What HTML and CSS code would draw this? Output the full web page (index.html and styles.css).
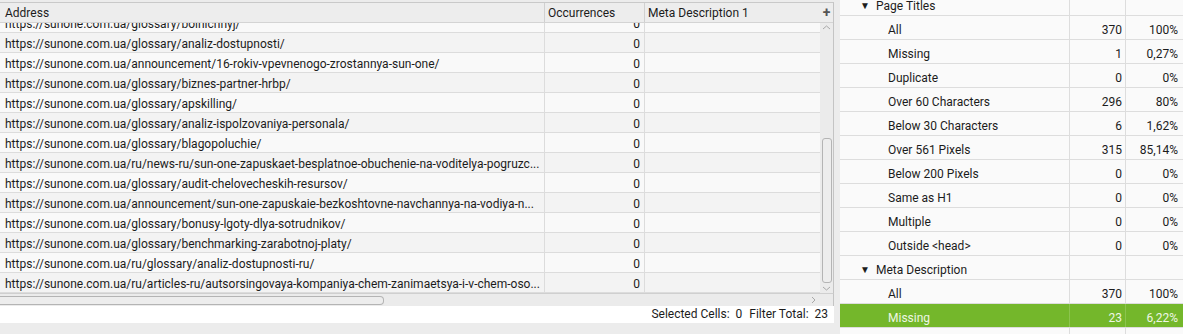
FILE: index.html
```html
<!DOCTYPE html>
<html lang="en">
<head>
    <meta charset="UTF-8">
    <title>Crawl Overview</title>
    <link rel="stylesheet" href="styles.css">
</head>
<body>

    <!-- Left: URL table -->
    <div class="left-panel">
        <div class="table-area">
            <div class="table">
                <div class="row header">
                    <div class="cell col-address">Address</div>
                    <div class="cell col-occ">Occurrences</div>
                    <div class="cell col-meta">Meta Description 1</div>
                </div>
                <div class="table-body">
                    <div class="rows" id="rows"></div>
                </div>
            </div>
            <div class="vscroll">
                <div class="vscroll-head">+</div>
                <div class="vscroll-track">
                    <svg class="arrow" width="13" height="10" viewBox="0 0 13 10"><path d="M3 6 L6.5 3 L10 6" fill="none" stroke="#a8a8a8" stroke-width="1"/></svg>
                    <div class="vscroll-space"></div>
                    <div class="vthumb"></div>
                    <svg class="arrow" width="13" height="10" viewBox="0 0 13 10"><path d="M3 4 L6.5 7 L10 4" fill="none" stroke="#a8a8a8" stroke-width="1"/></svg>
                </div>
            </div>
        </div>
        <div class="hscroll">
            <div class="hthumb"></div>
            <div class="hscroll-space"></div>
            <svg class="arrow" width="13" height="12" viewBox="0 0 13 12"><path d="M5 3 L8 6 L5 9" fill="none" stroke="#a8a8a8" stroke-width="1"/></svg>
            <div class="hscroll-corner"></div>
        </div>
        <div class="status">
            <span>Selected Cells:&nbsp; 0</span>
            <span>Filter Total:&nbsp; 23</span>
        </div>
    </div>

    <!-- Right: overview tree -->
    <div class="right-panel">
        <div class="tree" id="tree"></div>
    </div>

    <script>
        const urls = [
            "https://sunone.com.ua/glossary/bolnichnyj/",
            "https://sunone.com.ua/glossary/analiz-dostupnosti/",
            "https://sunone.com.ua/announcement/16-rokiv-vpevnenogo-zrostannya-sun-one/",
            "https://sunone.com.ua/glossary/biznes-partner-hrbp/",
            "https://sunone.com.ua/glossary/apskilling/",
            "https://sunone.com.ua/glossary/analiz-ispolzovaniya-personala/",
            "https://sunone.com.ua/glossary/blagopoluchie/",
            "https://sunone.com.ua/ru/news-ru/sun-one-zapuskaet-besplatnoe-obuchenie-na-voditelya-pogruzc...",
            "https://sunone.com.ua/glossary/audit-chelovecheskih-resursov/",
            "https://sunone.com.ua/announcement/sun-one-zapuskaie-bezkoshtovne-navchannya-na-vodiya-n...",
            "https://sunone.com.ua/glossary/bonusy-lgoty-dlya-sotrudnikov/",
            "https://sunone.com.ua/glossary/benchmarking-zarabotnoj-platy/",
            "https://sunone.com.ua/ru/glossary/analiz-dostupnosti-ru/",
            "https://sunone.com.ua/ru/articles-ru/autsorsingovaya-kompaniya-chem-zanimaetsya-i-v-chem-oso..."
        ];

        const rows = document.getElementById("rows");
        urls.forEach((url, i) => {
            const row = document.createElement("div");
            row.className = "row" + (i % 2 ? " alt" : "");
            row.innerHTML = `
                <div class="cell col-address">${url}</div>
                <div class="cell col-occ num">0</div>
                <div class="cell col-meta"></div>
            `;
            rows.appendChild(row);
        });

        const items = [
            { group: "Page Titles" },
            { name: "All", count: 370, pct: "100%" },
            { name: "Missing", count: 1, pct: "0,27%" },
            { name: "Duplicate", count: 0, pct: "0%" },
            { name: "Over 60 Characters", count: 296, pct: "80%" },
            { name: "Below 30 Characters", count: 6, pct: "1,62%" },
            { name: "Over 561 Pixels", count: 315, pct: "85,14%" },
            { name: "Below 200 Pixels", count: 0, pct: "0%" },
            { name: "Same as H1", count: 0, pct: "0%" },
            { name: "Multiple", count: 0, pct: "0%" },
            { name: "Outside &lt;head&gt;", count: 0, pct: "0%" },
            { group: "Meta Description" },
            { name: "All", count: 370, pct: "100%" },
            { name: "Missing", count: 23, pct: "6,22%", selected: true },
            { name: "Duplicate", count: 0, pct: "0%" }
        ];

        const tree = document.getElementById("tree");
        items.forEach(item => {
            const row = document.createElement("div");
            row.className = "tree-row" + (item.selected ? " selected" : "");
            if (item.group) {
                row.innerHTML = `
                    <div class="t-label group"><span class="caret">▼</span>${item.group}</div>
                    <div class="t-count"></div>
                    <div class="t-pct"></div>
                `;
            } else {
                row.innerHTML = `
                    <div class="t-label item">${item.name}</div>
                    <div class="t-count">${item.count}</div>
                    <div class="t-pct">${item.pct}</div>
                `;
            }
            tree.appendChild(row);
        });
    </script>

</body>
</html>
```

FILE: styles.css
```css
/* Basic reset */
* {
    margin: 0;
    padding: 0;
    box-sizing: border-box;
}

body {
    font-family: Roboto, "Liberation Sans", sans-serif;
    font-size: 12px;
    color: #1c1c1c;
    background-color: #ececec;
    display: flex;
    align-items: flex-start;
    height: 334px;
    overflow: hidden;
}

/* Left panel */
.left-panel {
    width: 834px;
    margin-top: 2px;
    display: flex;
    flex-direction: column;
}

.table-area {
    display: flex;
    border-top: 1px solid #c9c9c9;
    border-right: 1px solid #c4c4c4;
}

.table {
    width: 820px;
}

.row {
    display: flex;
    height: 20px;
    border-bottom: 1px solid #dcdcdc;
    background-color: #f9f9f9;
}

.row.alt {
    background-color: #f3f3f3;
}

.row.header {
    background-color: #ededed;
    border-bottom: 1px solid #d4d4d4;
}

.cell {
    line-height: 22px;
    padding: 0 4px 0 5px;
    white-space: nowrap;
    overflow: hidden;
    border-right: 1px solid #dcdcdc;
}

.header .cell {
    line-height: 21px;
    border-right-color: #d0d0d0;
}

.col-address {
    width: 545px;
}

.col-occ {
    width: 100px;
    padding-left: 3px;
}

.col-meta {
    width: 175px;
    padding-left: 3px;
    border-right: none;
}

.num {
    text-align: right;
}

.table-body {
    height: 270px;
    overflow: hidden;
}

.rows {
    margin-top: -10px;
}

/* Vertical scrollbar */
.vscroll {
    width: 13px;
    display: flex;
    flex-direction: column;
}

.vscroll-head {
    height: 20px;
    background-color: #ededed;
    border-bottom: 1px solid #d4d4d4;
    font-weight: bold;
    font-size: 14px;
    line-height: 19px;
    text-align: center;
    color: #555;
}

.vscroll-track {
    flex: 1;
    background-color: #ebebeb;
    display: flex;
    flex-direction: column;
    align-items: center;
}

.vscroll-space {
    flex: 1;
}

.vthumb {
    width: 10px;
    height: 145px;
    border: 1px solid #b4b4b4;
    border-radius: 3px;
    background-color: #ededed;
}

.arrow {
    display: block;
}

/* Horizontal scrollbar */
.hscroll {
    height: 13px;
    display: flex;
    align-items: center;
    background-color: #ebebeb;
    border-top: 1px solid #cfcfcf;
    border-right: 1px solid #c4c4c4;
}

.hthumb {
    width: 384px;
    height: 9px;
    border: 1px solid #b4b4b4;
    border-left: none;
    border-radius: 0 4px 4px 0;
    background-color: #ededed;
}

.hscroll-space {
    flex: 1;
}

.hscroll-corner {
    width: 13px;
    height: 100%;
}

/* Status bar */
.status {
    height: 17px;
    background-color: #ffffff;
    display: flex;
    justify-content: flex-end;
    gap: 7px;
    padding-right: 6px;
    line-height: 17px;
}

/* Right panel */
.right-panel {
    width: 343px;
    height: 334px;
    margin-left: 6px;
    overflow: hidden;
    background-color: #fafafa;
}

.tree {
    margin-top: -8px;
}

.tree-row {
    display: flex;
    height: 24px;
    border-bottom: 1px solid #dddddd;
    line-height: 23px;
}

.tree-row > div {
    padding-top: 4px;
    line-height: 20px;
}

.t-label {
    width: 230px;
    border-right: 1px solid #dddddd;
    white-space: nowrap;
}

.tree-row > .t-label.group {
    padding-left: 20px;
}

.tree-row > .t-label.item {
    padding-left: 48px;
}

.caret {
    font-size: 10px;
    display: inline-block;
    width: 16px;
    vertical-align: top;
}

.tree-row > .t-count {
    width: 56px;
    text-align: right;
    padding-right: 3px;
    border-right: 1px solid #dddddd;
}

.tree-row > .t-pct {
    flex: 1;
    text-align: right;
    padding-right: 5px;
}

.tree-row.selected {
    background-color: #74b72b;
    color: #eef6e4;
}

.tree-row.selected .t-label,
.tree-row.selected .t-count {
    border-right-color: #8cc44e;
}
```
